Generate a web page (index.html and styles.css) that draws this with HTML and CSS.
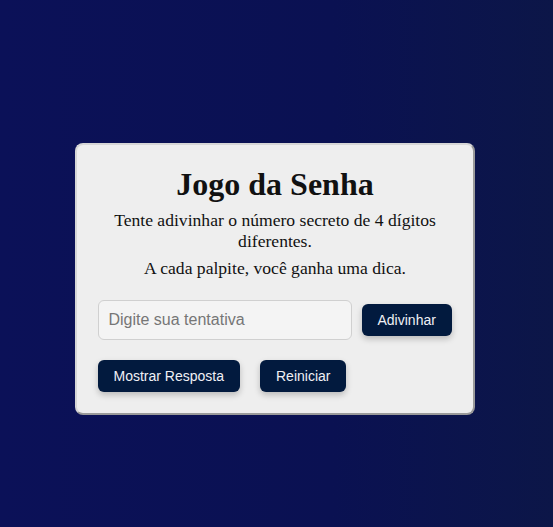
FILE: index.html
```html
<!DOCTYPE html>
<html lang="pt">
<head>
<meta charset="utf-8">
<title>Jogo da Senha</title>
<link rel="stylesheet" href="styles.css">
</head>
<body>
<main class="page">
  <section class="card">
    <h1 class="title">Jogo da Senha</h1>
    <p class="text">Tente adivinhar o número secreto de 4 dígitos diferentes.</p>
    <p class="text">A cada palpite, você ganha uma dica.</p>
    <div class="row guess-row">
      <input class="guess-input" type="text" placeholder="Digite sua tentativa">
      <button class="btn">Adivinhar</button>
    </div>
    <div class="row actions-row">
      <button class="btn">Mostrar Resposta</button>
      <button class="btn">Reiniciar</button>
    </div>
  </section>
</main>
</body>
</html>
```
FILE: styles.css
```css
html, body {
  margin: 0;
  padding: 0;
  height: 100%;
}
body {
  background: linear-gradient(90deg, #0b1158 0%, #0a1152 60%, #0c1648 100%);
  font-family: "Liberation Serif", serif;
}
.page {
  min-height: 100%;
  display: flex;
  align-items: center;
  justify-content: center;
  padding: 31px 4px 0 0;
  box-sizing: border-box;
}
.card {
  width: 400px;
  box-sizing: border-box;
  background: #eeeeee;
  border: 2px solid;
  border-color: #d6d6d6 #9a9a9a #9a9a9a #d6d6d6;
  border-radius: 8px;
  padding: 21px 20px 21px 21px;
  text-align: center;
  color: #111;
}
.title {
  margin: 0 0 8px;
  font-size: 32px;
  font-weight: bold;
  line-height: 1.15;
}
.text {
  margin: 0 0 6px;
  font-size: 17.6px;
  line-height: 21px;
}
.row {
  display: flex;
  align-items: center;
}
.guess-row {
  margin-top: 21px;
  gap: 10px;
}
.actions-row {
  margin-top: 20px;
  gap: 20px;
}
.guess-input {
  width: 254px;
  height: 40px;
  box-sizing: border-box;
  border: 1px solid #d0d0d0;
  border-radius: 6px;
  background: #f4f4f4;
  padding: 0 10px;
  font-family: "Liberation Sans", sans-serif;
  font-size: 16px;
  color: #333;
}
.guess-input::placeholder {
  color: #767676;
}
.btn {
  height: 32px;
  padding: 0 16px;
  border: none;
  border-radius: 6px;
  background: #021a3e;
  color: #f0f0f5;
  font-family: "Liberation Sans", sans-serif;
  font-size: 14px;
  box-shadow: 0 3px 6px rgba(0, 0, 0, 0.22);
}
```
